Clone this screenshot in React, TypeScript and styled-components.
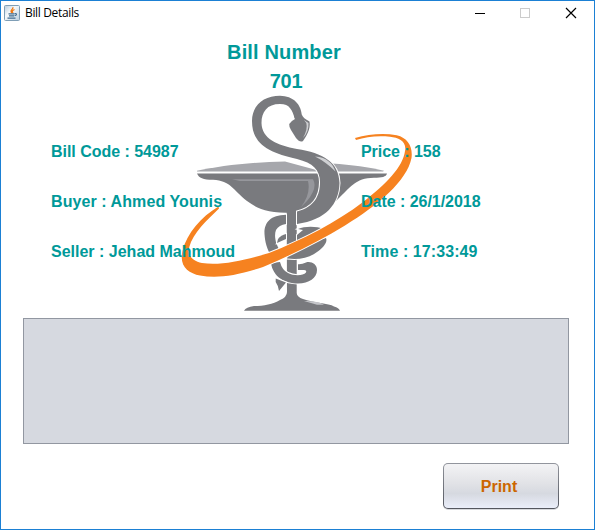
import React from "react";
import styled, { createGlobalStyle } from "styled-components";

const GlobalStyle = createGlobalStyle`
  * { box-sizing: border-box; }
  body { margin: 0; background: #fff; }
`;

const Window = styled.div`
  position: relative;
  display: flex;
  flex-direction: column;
  width: 595px;
  height: 530px;
  border: 1px solid #1b80d4;
  background: #fff;
  overflow: hidden;
  font-family: "Liberation Sans", Arial, sans-serif;
`;

const TitleBar = styled.header`
  display: flex;
  align-items: center;
  height: 25px;
  padding-left: 3px;
  flex: none;
`;

const AppIcon = styled.svg`
  width: 16px;
  height: 16px;
  margin-bottom: 1px;
  flex: none;
`;

const Caption = styled.span`
  flex: 1;
  margin: -2px 0 0 5px;
  font: 12px/16px "Open Sans", "Noto Sans", sans-serif;
  letter-spacing: -0.35px;
  color: #000;
`;

const ControlIcon = styled.svg`
  display: block;
  position: relative;
  left: 1px;
  width: 46px;
  height: 25px;
  flex: none;
`;

const Emblem = styled.svg`
  position: absolute;
  left: -1px;
  top: -1px;
  width: 595px;
  height: 318px;
  pointer-events: none;
`;

const Content = styled.main`
  position: relative;
  display: flex;
  flex-direction: column;
  flex: 1;
`;

const Heading = styled.div`
  width: 566px;
  padding-top: 12px;
  text-align: center;
  color: #099;
  font-size: 20px;
  font-weight: bold;
  line-height: 29px;
  letter-spacing: 0.15px;
`;

const HeadingNumber = styled.div`
  padding-left: 4px;
  letter-spacing: -0.3px;
`;

const Details = styled.div`
  display: grid;
  grid-template-columns: 310px 1fr;
  grid-auto-rows: 50px;
  align-items: center;
  margin-top: 31px;
  padding-left: 50px;
  height: 150px;
`;

const Field = styled.div<{ $spacing?: number }>`
  color: #099;
  font-size: 16px;
  font-weight: bold;
  line-height: 20px;
  letter-spacing: ${({ $spacing = 0 }) => $spacing}px;
  white-space: nowrap;
`;

const ItemsPanel = styled.section`
  width: 546px;
  height: 126px;
  margin: 41px 0 0 22px;
  border: 1px solid #9297a1;
  background: #d6d9e0;
`;

const PrintButton = styled.button`
  align-self: flex-end;
  width: 116px;
  height: 46px;
  margin: 19px 35px 0 0;
  padding: 1px 4px 0 0;
  border: 1px solid transparent;
  border-radius: 5px;
  background:
    linear-gradient(#f3f3f5, #e1e2e6 45%, #d6d9e0 67%, #eaeefa) padding-box,
    linear-gradient(#92959d, #53565e) border-box;
  box-shadow: 0 1px 0 #d8dade;
  color: #c60;
  font: bold 16px "Liberation Sans", Arial, sans-serif;
`;

const JavaIcon = () => (
  <AppIcon viewBox="0 0 16 16">
    <defs>
      <linearGradient id="java" x2="1" y2="1">
        <stop stopColor="#b5cbdc" />
        <stop offset=".4" stopColor="#f6f9fb" />
        <stop offset="1" stopColor="#b9cddd" />
      </linearGradient>
    </defs>
    <rect x=".5" y=".5" width="15" height="15" rx="1" fill="url(#java)" stroke="#7f9eb6" />
    <path d="M9 2.3C9 5 5.3 5 7.8 8M10.5 4.5C7.5 6 8 6.5 9 8" fill="none" stroke="#ee7914" strokeWidth="1.3" />
    <path d="M4.5 8.9h6M5 10.9h5M3.5 13.1h8M10.8 8.8c2.6-.8 2 1.4-.3 2" fill="none" stroke="#416c90" strokeWidth="1.1" />
  </AppIcon>
);

const PharmacyEmblem = () => (
  <Emblem viewBox="0 0 595 318">
    <g fill="#797a7e">
      <path fill="#a6a7ac" d="M197 170.7C219 166 252 162 285 161.5L322 171.5H197Z" />
      <path fill="#a6a7ac" d="M332 163.5C352 165 369 167 384 170.7L383 171.5H334Z" />
      <path d="M197 173.4H387C386 177 382 177.4 374 177.8C355 178 350 188 337 200C326 209 314 212.5 296 212.7C269 213 259 210 247 201C233 190 231 181 213 179.8C203 179.5 199 178 197 173.4Z" />
      <path fill="#96979c" d="M232 179.2H313Q318 188 307 201L301 207Q311 194 308 181H240Z" />
      <path d="M286.7 211H296.7V293Q297 297 303 299C313 303 329 303 334 306.5Q339 308 340 310.7H244Q246 307 254 306C264 306 273 304 280 300Q287 297 287 292Z" />
      <path fill="#c5c6ca" d="M304 301L317 304.8H324C319 301.5 312 301 304 301Z" />
    </g>
    <g fill="#797a7e" stroke="#fff" strokeWidth="2" paintOrder="stroke">
      <path d="M286 214.7C270 215 264 223 264.5 234C265 242 267 250 272 257L281 252C275 244 274 235 276 230Q279 225 286 224Z" />
      <path d="M277 243L286 239V234Q281 235 278 239Z" />
      <path d="M298 229C305 226 316 226 324 229L309 239L297 242V235L303 230Z" />
      <path d="M291 248L326 238C328 242 323 248 317 252C309 258 299 260 287 258.5Z" />
      <path d="M271 263C273 277 285 283.5 298 283.5C309 283.5 317 278 317 270C317 264 311 261 306 262.5Q302 264.5 298 264.2V270H304Q307 270 306 272.5C303 276 294 276 288 273Q282 270 280 262Z" />
      <path d="M275.7 278.5L286 282.5L279 291Q278 285 275.7 282Z" />
      <path d="M295 119C292 110 290 104 280 104C267 104 261.5 112 261.5 123C262 139 277 145 297 149C323 153 339 162 339.5 183C339 204 326 220 297 224V211.5C315 207 320 195 320 182C320 170 313 163 297 159C270 153 252 145 252 121C252 105 264 95.8 280 95.8C293 96 302 104 302 118Z" />
    </g>
    <path fill="#797a7e" d="M294 116Q299 112 302 115Q303 118 309.5 121.5C311 129 306 137 303 141Q300 143 296 138L291 130Q289 127 289.2 124Q291 121 295 119Z" />
    <path fill="#cfd0d3" d="M304 120L308.5 123Q309 132 303 138Q308 129 306.3 123ZM315 156.5C327 157 333 164 335.5 171.5Q326 162 315 156.5Z" />
    <path fill="#f68220" stroke="#fff" strokeWidth="2" paintOrder="stroke" d="M355 138C369 134 384 133 396.7 135.3C408 138 413 147 411.5 158C407 181 378 205 345 225.5C319 241.5 291 255 263 267C236 276 217 278.5 200 275.5C188 273 179 266 182.5 251C187 233 201 217 218.5 206.5L219 208.5C207 220 193 233 189.3 247C187 256 193 261 202 263C221 266 245 260 269 253C302 240 337 222 363 202C386 184 403 167 405 151C407 142 399 137.5 390 136.8C377 135.5 366 137 356 140Z" />
  </Emblem>
);

const fields = [
  { text: "Bill Code : 54987", spacing: -0.03 },
  { text: "Price : 158", spacing: -0.05 },
  { text: "Buyer : Ahmed Younis", spacing: 0.08 },
  { text: "Date : 26/1/2018", spacing: -0.03 },
  { text: "Seller : Jehad Mahmoud", spacing: 0 },
  { text: "Time : 17:33:49", spacing: 0.08 },
];

export default function App() {
  return (
    <>
      <GlobalStyle />
      <Window>
        <PharmacyEmblem />
        <TitleBar>
          <JavaIcon />
          <Caption>Bill Details</Caption>
          <ControlIcon viewBox="0 0 46 25">
            <path d="M18 12.5h10" stroke="#000" />
          </ControlIcon>
          <ControlIcon viewBox="0 0 46 25">
            <rect x="17.5" y="7.5" width="9" height="9" fill="none" stroke="#ccc" />
          </ControlIcon>
          <ControlIcon viewBox="0 0 46 25">
            <path d="M17 7l10 10M27 7L17 17" stroke="#000" strokeWidth="1.2" />
          </ControlIcon>
        </TitleBar>
        <Content>
          <Heading>
            <div>Bill Number</div>
            <HeadingNumber>701</HeadingNumber>
          </Heading>
          <Details>
            {fields.map(({ text, spacing }) => (
              <Field key={text} $spacing={spacing}>{text}</Field>
            ))}
          </Details>
          <ItemsPanel />
          <PrintButton>Print</PrintButton>
        </Content>
      </Window>
    </>
  );
}
